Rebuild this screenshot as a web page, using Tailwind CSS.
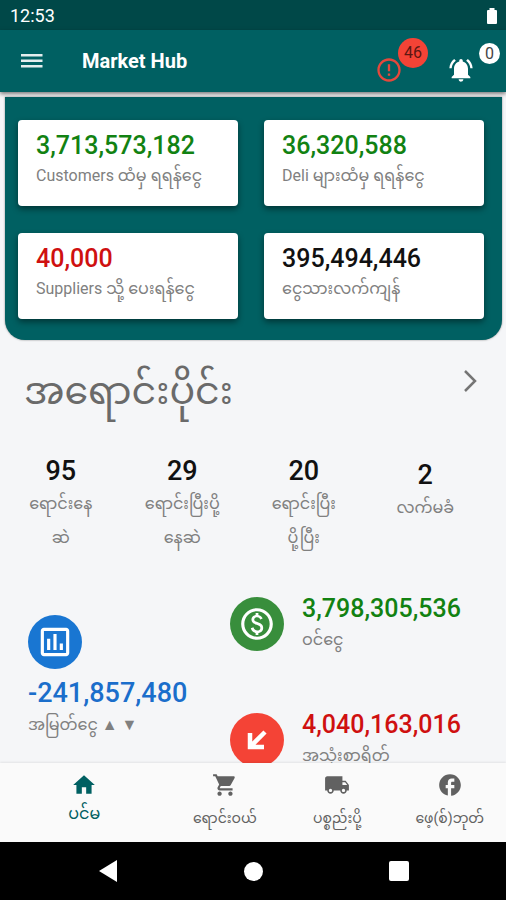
<!DOCTYPE html>
<html lang="my">
<head>
<meta charset="utf-8">
<meta name="viewport" content="width=device-width, initial-scale=1">
<title>Market Hub</title>
<script src="https://cdn.jsdelivr.net/npm/@tailwindcss/browser@4"></script>
</head>
<body class="flex h-screen flex-col overflow-hidden bg-[#f5f6f8] font-[Roboto,'Noto_Sans_Myanmar','Noto_Sans',Padauk,sans-serif] text-[#808080]">

  <div class="flex h-[30px] shrink-0 items-center justify-between bg-[#004848] px-2.5 pt-0.5 text-white">
    <time class="text-lg">12:53</time>
    <svg class="mr-[-2px] h-[18px] w-3" viewBox="0 0 12 18" fill="#fff" aria-hidden="true"><path d="M3.500 1h5v2H10q1 0 1 1v12q0 1-1 1H2q-1 0-1-1V4q0-1 1-1h1.500z"/></svg>
  </div>

  <header class="z-10 flex h-[62px] shrink-0 items-center bg-[#006062] pl-[18px] shadow-[0_2px_4px_rgba(0,0,0,0.5)]">
    <button type="button" aria-label="Menu" class="flex size-7 items-center justify-center">
      <svg class="h-4 w-[22px]" viewBox="0 0 22 16" fill="#e4eeee"><path d="M0 1h21.500v2.500H0zM0 6.500h21.500V9H0zM0 12h21.500v2.500H0z"/></svg>
    </button>
    <h1 class="ml-9 flex-1 text-xl font-bold text-white">Market Hub</h1>
    <button type="button" aria-label="Alerts" class="relative mt-[18px] mr-11 size-7">
      <svg class="size-7" viewBox="0 0 24 24" fill="#e5483c"><path d="M11 15h2v2h-2zm0-8h2v6h-2zm1-5C6.480 2 2 6.480 2 12s4.480 10 10 10 10-4.480 10-10S17.520 2 12 2zm0 18c-4.420 0-8-3.580-8-8s3.580-8 8-8 8 3.580 8 8-3.580 8-8 8z"/></svg>
      <span class="absolute -top-[18px] left-[23px] flex size-[30px] items-center justify-center rounded-full bg-[#f44336] text-base text-[#5c1712]">46</span>
    </button>
    <button type="button" aria-label="Notifications" class="relative mt-[18px] mr-[31px] size-7">
      <svg class="size-7" viewBox="0 0 24 24" fill="#fff"><path d="M7.580 4.080L6.150 2.650C3.750 4.480 2.170 7.300 2.030 10.500h2c.150-2.650 1.510-4.970 3.550-6.420zm12.390 6.420h2c-.150-3.200-1.730-6.020-4.120-7.850l-1.420 1.430c2.020 1.450 3.390 3.770 3.540 6.420zM18 11c0-3.070-1.640-5.640-4.500-6.320V4c0-.830-.670-1.500-1.500-1.500s-1.500.670-1.500 1.500v.680C7.630 5.360 6 7.920 6 11v5l-2 2v1h16v-1l-2-2v-5zm-6 11c.140 0 .270-.010.400-.040.650-.140 1.180-.580 1.440-1.180.100-.240.150-.500.150-.780h-4c.010 1.100.900 2 2.010 2z"/></svg>
      <span class="absolute -top-[13px] left-8 flex size-[21px] items-center justify-center rounded-full bg-white text-base text-[#444]">0</span>
    </button>
  </header>

  <main class="min-h-0 flex-1 overflow-hidden">
    <section class="mt-[5px] mr-1 ml-[5px] grid grid-cols-2 gap-x-[26px] gap-y-[27px] rounded-b-[20px] bg-[#006062] pt-[23px] pr-[18px] pb-[21px] pl-[13px] shadow-[0_0_2px_rgba(0,0,0,0.5)]">
      <article class="h-[86px] rounded bg-white px-[18px] pt-2.5 shadow-[0_3px_6px_rgba(0,0,0,0.45)]">
        <p class="text-[25px] leading-8 font-medium text-[#128212]">3,713,573,182</p>
        <p class="text-base leading-7 whitespace-nowrap">Customers ထံမှ ရရန်ငွေ</p>
      </article>
      <article class="h-[86px] rounded bg-white px-[18px] pt-2.5 shadow-[0_3px_6px_rgba(0,0,0,0.45)]">
        <p class="text-[25px] leading-8 font-medium text-[#128212]">36,320,588</p>
        <p class="text-base leading-7 whitespace-nowrap">Deli များထံမှ ရရန်ငွေ</p>
      </article>
      <article class="h-[86px] rounded bg-white px-[18px] pt-2.5 shadow-[0_3px_6px_rgba(0,0,0,0.45)]">
        <p class="text-[25px] leading-8 font-medium text-[#cf1010]">40,000</p>
        <p class="text-base leading-7 whitespace-nowrap">Suppliers သို့ ပေးရန်ငွေ</p>
      </article>
      <article class="h-[86px] rounded bg-white px-[18px] pt-2.5 shadow-[0_3px_6px_rgba(0,0,0,0.45)]">
        <p class="text-[25px] leading-8 font-medium text-[#111]">395,494,446</p>
        <p class="text-base leading-7 whitespace-nowrap">ငွေသားလက်ကျန်</p>
      </article>
    </section>

    <section>
      <div class="flex h-[101px] items-center justify-between pr-7 pl-6">
        <h2 class="text-[38px] leading-[80px] text-[#6a6a6a]">အရောင်းပိုင်း</h2>
        <a href="#sales" aria-label="Details" class="mb-5"><svg class="h-6 w-4" viewBox="0 0 16 24" fill="none" stroke="#757575" stroke-width="2.500"><path d="M3 2l10 10L3 22"/></svg></a>
      </div>
      <div class="mt-[14px] grid grid-cols-4 pr-5 text-center">
        <div class="px-5"><p class="text-[27px] leading-8 font-medium text-[#111]">95</p><p class="text-base leading-[34px] whitespace-nowrap">ရောင်းနေ<br>ဆဲ</p></div>
        <div class="px-5"><p class="text-[27px] leading-8 font-medium text-[#111]">29</p><p class="text-base leading-[34px] whitespace-nowrap">ရောင်းပြီးပို့<br>နေဆဲ</p></div>
        <div class="px-5"><p class="text-[27px] leading-8 font-medium text-[#111]">20</p><p class="text-base leading-[34px] whitespace-nowrap">ရောင်းပြီး<br>ပို့ပြီး</p></div>
        <div class="px-5 pt-1"><p class="text-[27px] leading-8 font-medium text-[#111]">2</p><p class="text-base leading-[34px] whitespace-nowrap">လက်မခံ</p></div>
      </div>
    </section>

    <section class="mt-[38px] grid grid-cols-[202px_1fr] pl-7">
      <div class="pt-[22px]">
        <span class="flex size-[54px] items-center justify-center rounded-full bg-[#1976d2]">
          <svg class="size-[38px]" viewBox="0 0 24 24" fill="#fff"><path d="M9 17H7v-7h2v7zm4 0h-2V7h2v10zm4 0h-2v-4h2v4zm2 2H5V5h14v14zm0-16H5c-1.100 0-2 .900-2 2v14c0 1.100.900 2 2 2h14c1.100 0 2-.900 2-2V5c0-1.100-.900-2-2-2z"/></svg>
        </span>
        <p class="mt-2 text-[27px] leading-8 font-medium text-[#1b6ecb]">-241,857,480</p>
        <p class="text-base leading-8">အမြတ်ငွေ ▲ ▼</p>
      </div>
      <div>
        <div class="flex h-[116px] gap-[18px]">
          <span class="mt-1 flex size-[54px] shrink-0 items-center justify-center rounded-full bg-[#388e3c]">
            <svg class="size-[38px]" viewBox="0 0 24 24" fill="#fff"><path d="M12 2C6.480 2 2 6.480 2 12s4.480 10 10 10 10-4.480 10-10S17.520 2 12 2zm0 18c-4.410 0-8-3.590-8-8s3.590-8 8-8 8 3.590 8 8-3.590 8-8 8zm.890-8.900c-1.780-.590-2.640-.960-2.640-1.900 0-1.020 1.110-1.390 1.810-1.390 1.310 0 1.790.990 1.900 1.340l1.580-.670c-.150-.450-.820-1.920-2.660-2.240V5h-1.750v1.260c-2.600.560-2.620 2.850-2.620 2.960 0 2.270 2.250 2.910 3.350 3.310 1.580.560 2.280 1.070 2.280 2.030 0 1.130-1.050 1.610-1.980 1.610-1.820 0-2.340-1.870-2.400-2.090l-1.660.670c.630 2.190 2.280 2.780 3.020 2.960V19h1.750v-1.240c.520-.090 3.020-.590 3.020-3.220.010-1.390-.600-2.610-3-3.440z"/></svg>
          </span>
          <div><p class="text-[25px] leading-8 font-medium text-[#128212]">3,798,305,536</p><p class="text-base leading-[30px]">ဝင်ငွေ</p></div>
        </div>
        <div class="flex h-[116px] gap-[18px]">
          <span class="mt-1 flex size-[54px] shrink-0 items-center justify-center rounded-full bg-[#f44336]">
            <svg class="size-7" viewBox="0 0 28 28" fill="none" stroke="#fff" stroke-width="4.500"><path d="M7 7v14h14M8 20L22 6"/></svg>
          </span>
          <div><p class="text-[25px] leading-8 font-medium text-[#cf1010]">4,040,163,016</p><p class="text-base leading-[30px]">အသုံးစာရိတ်</p></div>
        </div>
      </div>
    </section>
  </main>

  <nav class="z-10 grid h-[79px] shrink-0 grid-cols-[3fr_2fr_2fr_2fr] bg-[#fafafa] pt-[9px] text-center text-sm whitespace-nowrap shadow-[0_-1px_2px_rgba(0,0,0,0.08)]">
    <a href="#home" class="flex flex-col items-center text-[#006062]">
      <svg class="size-[26px]" viewBox="0 0 24 24" fill="currentColor"><path d="M10 20v-6h4v6h5v-8h3L12 3 2 12h3v8z"/></svg>
      <span class="text-base leading-8">ပင်မ</span>
    </a>
    <a href="#trade" class="flex flex-col items-center text-[#616161]">
      <svg class="size-[26px]" viewBox="0 0 24 24" fill="currentColor"><path d="M7 18c-1.100 0-1.990.900-1.990 2S5.900 22 7 22s2-.900 2-2-.900-2-2-2zM1 2v2h2l3.600 7.590-1.350 2.450c-.160.280-.250.610-.250.960 0 1.100.900 2 2 2h12v-2H7.420c-.140 0-.250-.110-.250-.250l.030-.120.900-1.630h7.450c.750 0 1.410-.410 1.750-1.030l3.580-6.490c.080-.140.120-.310.120-.480 0-.550-.450-1-1-1H5.210l-.940-2H1zm16 16c-1.100 0-1.990.900-1.990 2s.890 2 1.990 2 2-.900 2-2-.900-2-2-2z"/></svg>
      <span class="leading-10">ရောင်းဝယ်</span>
    </a>
    <a href="#delivery" class="flex flex-col items-center text-[#616161]">
      <svg class="size-[26px]" viewBox="0 0 24 24" fill="currentColor"><path d="M20 8h-3V4H3c-1.100 0-2 .900-2 2v11h2c0 1.660 1.340 3 3 3s3-1.340 3-3h6c0 1.660 1.340 3 3 3s3-1.340 3-3h2v-5l-3-4zM6 18.500c-.830 0-1.500-.670-1.500-1.500s.670-1.500 1.500-1.500 1.500.670 1.500 1.500-.670 1.500-1.500 1.500zm13.500-9l1.960 2.500H17V9.500h2.500zm-1.500 9c-.830 0-1.500-.670-1.500-1.500s.670-1.500 1.500-1.500 1.500.670 1.500 1.500-.670 1.500-1.500 1.500z"/></svg>
      <span class="leading-10">ပစ္စည်းပို့</span>
    </a>
    <a href="#facebook" class="flex flex-col items-center text-[#616161]">
      <svg class="size-[26px]" viewBox="0 0 24 24" fill="currentColor"><path d="M22 12c0-5.520-4.480-10-10-10S2 6.480 2 12c0 4.840 3.440 8.870 8 9.800V15H8v-3h2V9.500C10 7.570 11.570 6 13.500 6H16v3h-2c-.550 0-1 .450-1 1v2h3v3h-3v6.950c5.050-.500 9-4.760 9-9.950z"/></svg>
      <span class="leading-10">ဖေ့(စ်)ဘုတ်</span>
    </a>
  </nav>

  <div class="z-10 flex h-[58px] shrink-0 items-center justify-center gap-[126px] bg-black">
    <button type="button" aria-label="Back"><svg class="h-[22px] w-5" viewBox="0 0 20 22" fill="#fff"><path d="M19 0v22L1 11z"/></svg></button>
    <button type="button" aria-label="Home" class="size-[19px] rounded-full bg-white"></button>
    <button type="button" aria-label="Recent" class="size-5 rounded-xs bg-white"></button>
  </div>
</body>
</html>
